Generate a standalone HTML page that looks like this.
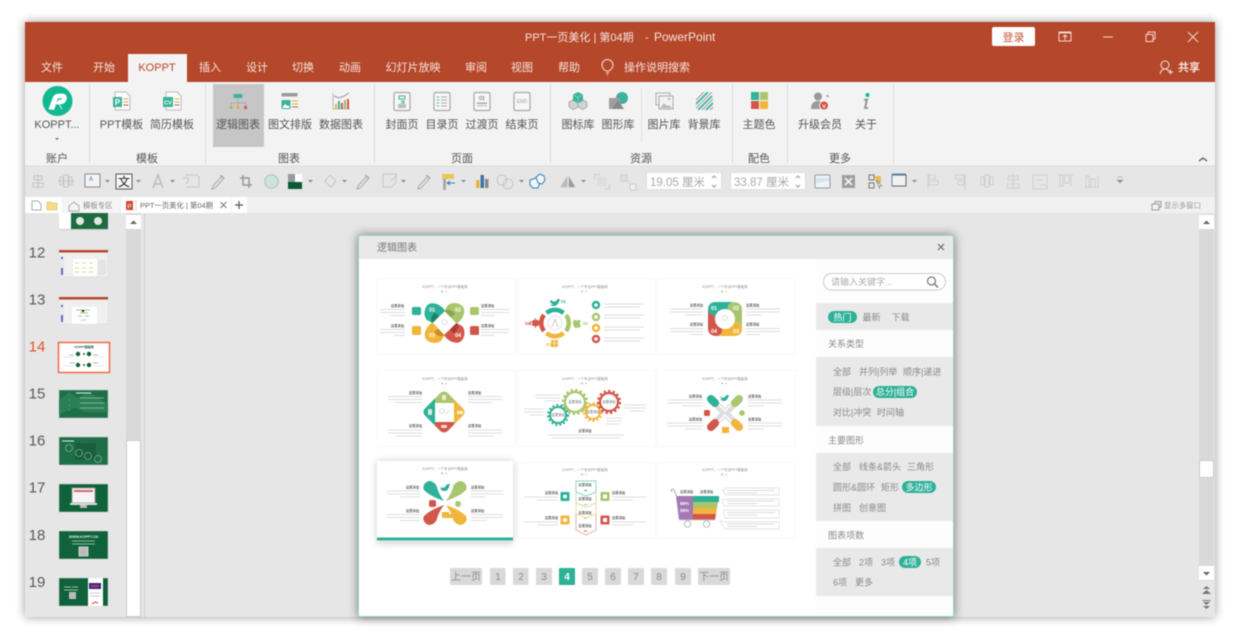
<!DOCTYPE html>
<html lang="zh"><head><meta charset="utf-8"><title>PPT一页美化</title>
<style>
html,body{margin:0;padding:0;background:#fff;width:1240px;height:640px;overflow:hidden}
svg{display:block;filter:blur(.55px);font-family:"Liberation Sans","Noto Sans CJK SC",sans-serif}
.tb{font-size:11px;fill:#f7e4de}
.rb{font-size:11px;fill:#555}
.m{text-anchor:middle}
.e{text-anchor:end}
.s{font-size:9px;fill:#8a8a8a}
.w{fill:#fff}
.sn{font-size:15px;fill:#5a5a5a;text-anchor:middle}
.ct{font-size:3.4px;fill:#8a8a8a;text-anchor:middle}
.ch{font-size:3.3px;fill:#666;font-weight:bold}
.l{stroke:#d2d2d2;stroke-width:.8;fill:none}
.ic{fill:none;stroke:#c6c6c6;stroke-width:1}
.g{fill:#c8c8c8}
.pg{font-size:10px;fill:#8a8a8a;text-anchor:middle}
.card{fill:#fff;stroke:#f8f8f8;stroke-width:1}
.n{font-size:5.500px;fill:#fff;text-anchor:middle;font-weight:bold}
</style></head><body>
<svg width="1240" height="640" viewBox="0 0 1240 640" xmlns="http://www.w3.org/2000/svg">
<defs>
<filter id="sh" x="-10%" y="-10%" width="120%" height="120%"><feGaussianBlur stdDeviation="5"/></filter>
<filter id="sh2" x="-30%" y="-30%" width="160%" height="160%"><feGaussianBlur stdDeviation="4"/></filter>
<clipPath id="dia"><rect x="428" y="396" width="32" height="32" rx="5" transform="rotate(45 444 412)"/></clipPath>
<clipPath id="bgst"><rect x="696" y="92" width="17" height="18"/></clipPath>
</defs>
<rect width="1240" height="640" fill="#fff"/>
<rect x="25" y="22" width="1190" height="595" fill="#000" opacity=".4" filter="url(#sh)"/>
<!-- window -->
<rect x="25" y="22" width="1190" height="595" fill="#e6e6e6"/>
<rect x="25" y="22" width="1190" height="60" fill="#b5472a"/>
<text x="525" y="41" class="tb">PPT一页美化 | 第04期</text><text x="645" y="41" class="tb">-</text><text x="654" y="41" class="tb" style="font-size:12px">PowerPoint</text>
<rect x="992" y="27" width="43" height="19" rx="2" fill="#fff"/>
<text x="1013.500" y="41" class="m" style="font-size:11px;fill:#c4583c">登录</text>
<rect x="1059" y="32" width="12" height="9" fill="none" stroke="#f3d6cd"/><path d="M1065 40v-5m-2 2l2-2 2 2M1059 33h12" fill="none" stroke="#f3d6cd"/>
<path d="M1103 37h10" stroke="#f3d6cd"/>
<path d="M1146 34.500h7v7h-7zM1148 34v-2h7v7h-2" fill="none" stroke="#f3d6cd"/>
<path d="M1188 32l10 10m0-10l-10 10" stroke="#f3d6cd"/>
<rect x="128" y="54" width="59" height="28" fill="#f3f3f3"/>
<g class="tb">
<text x="52" y="71" class="m">文件</text><text x="104" y="71" class="m">开始</text>
<text x="157" y="71" class="m" style="fill:#b5472a">KOPPT</text>
<text x="210" y="71" class="m">插入</text><text x="257" y="71" class="m">设计</text><text x="303" y="71" class="m">切换</text><text x="350" y="71" class="m">动画</text><text x="413" y="71" class="m">幻灯片放映</text><text x="476" y="71" class="m">审阅</text><text x="522" y="71" class="m">视图</text><text x="569" y="71" class="m">帮助</text><text x="657" y="71" class="m">操作说明搜索</text>
<text x="1189" y="71" class="m" style="font-weight:bold">共享</text></g>
<path d="M606 71c-3-2-4-4-4-6a5.500 5.500 0 0 1 11 0c0 2-1 4-4 6zM606 73h3M607 75h1" fill="none" stroke="#f7e4de"/>
<circle cx="1165" cy="65" r="4" fill="none" stroke="#f7e4de"/><path d="M1160 74c1-4 3-5 5-5s3 1 4 2M1168 72h5m-2.500-2.500v5" fill="none" stroke="#f7e4de"/>
<!-- ribbon -->
<rect x="25" y="82" width="1190" height="84" fill="#f3f3f3"/>
<rect x="213" y="84" width="51" height="63" fill="#c6c6c6"/>
<path d="M89.500 84v79M205.500 84v79M374.500 84v79M550.500 84v79M732.500 84v79M787.500 84v79M893.500 84v79" stroke="#d9d9d9"/>
<path d="M641.500 88v54" stroke="#e2e2e2"/>
<g class="rb">
<text x="57" y="128" class="m">KOPPT...</text><text x="121.500" y="128" class="m">PPT模板</text><text x="172" y="128" class="m">简历模板</text>
<text x="238" y="128" class="m">逻辑图表</text><text x="290" y="128" class="m">图文排版</text><text x="341" y="128" class="m">数据图表</text>
<text x="402" y="128" class="m">封面页</text><text x="442" y="128" class="m">目录页</text><text x="482" y="128" class="m">过渡页</text><text x="522" y="128" class="m">结束页</text>
<text x="578" y="128" class="m">图标库</text><text x="618" y="128" class="m">图形库</text><text x="664" y="128" class="m">图片库</text><text x="704" y="128" class="m">背景库</text>
<text x="759" y="128" class="m">主题色</text><text x="820" y="128" class="m">升级会员</text><text x="866" y="128" class="m">关于</text>
<text x="57" y="162" class="m">账户</text><text x="147" y="162" class="m">模板</text><text x="289" y="162" class="m">图表</text><text x="462" y="162" class="m">页面</text><text x="641" y="162" class="m">资源</text><text x="759" y="162" class="m">配色</text><text x="840" y="162" class="m">更多</text>
</g>
<path d="M55 138h4l-2 2z" fill="#666"/>
<path d="M1199 161l4-3 4 3" fill="none" stroke="#555" stroke-width="1.300"/>
<!-- logo -->
<circle cx="57.500" cy="101" r="15" fill="#13b891"/>
<path d="M49 109l4-11c1-3 3-4 6-4h3c4 0 5 3 4 6-1 3-3 4-7 4h-3l3-4h2c2 0 2-2 0-2h-2c-1 0-2 .5-2 1.500l-3 10zM59 104l3 5" fill="#fff" stroke="#fff" stroke-width=".8"/>
<!-- ppt -->
<path d="M115 92h11l4 4v14h-15z" fill="#fbfbfb" stroke="#bdbdbd"/><rect x="113" y="97" width="9" height="10" fill="#3cb39b"/><text x="117.500" y="105" class="w m" style="font-size:8px;font-weight:bold">P</text><path d="M123.500 99h5" stroke="#e8b33e"/><path d="M123.500 102h5" stroke="#9fc06a"/><path d="M123.500 105h5" stroke="#d4574a"/>
<path d="M166 92h11l4 4v14h-15z" fill="#fbfbfb" stroke="#bdbdbd"/><rect x="163" y="97" width="10" height="10" fill="#3cb39b"/><text x="168" y="104.500" class="w m" style="font-size:5.500px;font-weight:bold">CV</text><path d="M174.500 99h5" stroke="#e8b33e"/><path d="M174.500 102h5" stroke="#9fc06a"/><path d="M174.500 105h5" stroke="#d4574a"/>
<!-- org -->
<rect x="233.500" y="94" width="9" height="4" rx="1" fill="#3cb39b"/><path d="M238 98v5M231 108v-5h15v5M238 103v5" fill="none" stroke="#aaa"/><rect x="229.500" y="106" width="3" height="3" fill="#9fc06a"/><rect x="236.500" y="106" width="3" height="3" fill="#e8b33e"/><rect x="244" y="106" width="3" height="3" fill="#d4574a"/>
<!-- layout -->
<rect x="281.500" y="93" width="16" height="3.500" fill="#9a9a9a"/><rect x="281.500" y="100" width="9" height="9" fill="#3cb39b"/><path d="M282 108l3-4 2 2 1-1 2 3z" fill="#fff"/><path d="M292 101h6" stroke="#e8b33e"/><path d="M292 104h6" stroke="#9fc06a"/><path d="M292 107h6" stroke="#d4574a"/>
<!-- data -->
<path d="M333 93v16h17" fill="none" stroke="#bbb"/><path d="M334 96l5 2 5-2 5-3" fill="none" stroke="#999"/><rect x="335" y="104" width="2" height="5" fill="#e8b33e"/><rect x="338" y="101" width="2" height="8" fill="#3cb39b"/><rect x="341" y="103" width="2" height="6" fill="#d4574a"/><rect x="344" y="100" width="2" height="9" fill="#9fc06a"/><rect x="347" y="99" width="2" height="10" fill="#d4574a"/>
<!-- pages -->
<g fill="#f7f7f7" stroke="#a8a8a8" stroke-width="1.200"><rect x="394" y="92.500" width="16" height="18" rx="1.500"/><rect x="434" y="92.500" width="16" height="18" rx="1.500"/><rect x="474" y="92.500" width="16" height="18" rx="1.500"/><rect x="514" y="92.500" width="16" height="18" rx="1.500"/></g>
<path d="M399 96h6v3h-6zM401 101h3v2h-3" fill="none" stroke="#3cb39b"/><rect x="398" y="104" width="8" height="4" fill="#bbb"/>
<path d="M437 97h2M437 100h2M437 103h2M437 106h2" stroke="#3cb39b"/><path d="M441 97h6M441 100h6M441 103h6M441 106h6" stroke="#aaa"/>
<text x="482" y="100" class="m" style="font-size:5.500px;fill:#555">01</text><rect x="477" y="102.500" width="10" height="1.500" fill="#aaa"/><rect x="477" y="105" width="10" height="1.500" fill="#ccc"/>
<text x="522" y="103" class="m" style="font-size:5px;fill:#bbb;font-weight:bold">END</text>
<!-- cubes -->
<path d="M573.500 99.500l4.500 2.500v5l-4.500 2.500-4.500-2.500v-5zM582.500 99.500l4.500 2.500v5l-4.500 2.500-4.500-2.500v-5z" fill="#d2d2d2" stroke="#8d8d8d" stroke-width=".6"/><path d="M578 92l5 2.500v6l-5 3-5-3v-6z" fill="#3cb39b"/><path d="M573 94.500l5 3 5-3M578 97.500v6" fill="none" stroke="#9fdccd" stroke-width=".6"/>
<!-- shapes -->
<circle cx="622" cy="98" r="6" fill="#3cb39b"/><rect x="609" y="98" width="11" height="11" fill="#9e9e9e"/><path d="M612 109l6-9 6 9z" fill="#888"/>
<!-- pics -->
<rect x="656" y="93" width="14" height="12" fill="none" stroke="#aaa"/><rect x="659" y="96" width="14" height="13" fill="#f3f3f3" stroke="#aaa"/><path d="M660 108l4-5 3 3 2-1 3 3z" fill="#bbb"/><circle cx="669" cy="99" r="1.300" fill="#bbb"/>
<g clip-path="url(#bgst)"><path d="M694 106l14-14M698 110l14-14M702 114l14-14" stroke="#3cb39b" stroke-width="1.800"/><path d="M694 102l10-10M696 108l16-16M700 112l16-16M704 116l14-14" stroke="#aaa" stroke-width="1.200"/></g>
<!-- theme -->
<rect x="751" y="92" width="8" height="8" fill="#30b49a"/><rect x="760" y="92" width="8" height="8" fill="#a9c66f"/><rect x="751" y="101" width="8" height="8" fill="#d2574a"/><rect x="760" y="101" width="8" height="8" fill="#f2b53c"/>
<!-- vip -->
<circle cx="818" cy="96.500" r="4" fill="#9a9a9a"/><path d="M811 109c0-6 3-8 7-8s6 2 6 8z" fill="#9a9a9a"/><circle cx="824" cy="105.500" r="4.500" fill="#d5503f" stroke="#f3f3f3"/><text x="824" y="108" class="m" style="font-size:6px;fill:#fff;font-weight:bold">v</text><path d="M826 96h3m-1.500-1.500v3" stroke="#aaa"/>
<!-- about -->
<circle cx="867.500" cy="95" r="2" fill="#13b891"/><path d="M864 100l3-.5-2 8.500h3" fill="none" stroke="#999" stroke-width="2"/>
<!-- toolbar -->
<rect x="25" y="166" width="1190" height="31" fill="#e6e6e6"/><path d="M25 166h1190" stroke="#dcdcdc"/>
<g class="ic">
<path d="M34 176h8v4h-8zM33 183h10v4H33zM38 174v15"/>
<path d="M60 177h3v8h-3zM64 175h4v12h-4zM69 177h3v8h-3zM58 181h16"/>
<path d="M153 188l5-13 5 13m-8-4h6" stroke="#bbb" stroke-width="1.400"/>
<path d="M185 175h12l2 2v10h-12M183 178h5v4l-3 2"/>
<path d="M212 189l3-1 9-10-2-2-9 10zM220 175l4 4" stroke="#aaa"/>
<path d="M243 175v10h9M240 178h9v10" stroke="#999" stroke-width="1.500"/>
<path d="M325 181l5-6 6 6-5 6z"/><path d="M357 189l3-1 9-10-2-2-9 10zM365 175l4 4" stroke="#aaa"/>
<path d="M383 174h13v8l-4 5h-9zM397 175l-6 6"/>
<path d="M418 189l3-1 9-10-2-2-9 10zM426 175l4 4" stroke="#aaa"/>
<circle cx="502" cy="180" r="5"/><circle cx="508" cy="184" r="5"/>
<path d="M561 187l6-10v10zM569 177l6 10h-6z"/>
<path d="M928 174v16M929 175h6v4h-6zM929 181h9v4h-9z" stroke="#cfcfcf"/>
<path d="M965 174v16M955 175h9v4h-9zM958 181h6v4h-6z" stroke="#cfcfcf"/>
<path d="M981 177h3v8h-3zM985 175h4v12h-4zM990 177h3v8h-3z" stroke="#cfcfcf"/>
<path d="M1008 176h10v4h-10zM1007 184h12v4h-12zM1013 174v16" stroke="#cfcfcf"/>
<path d="M1033 175h14v14h-14zM1036 180h6M1040 185h6" stroke="#cfcfcf"/>
<path d="M1060 175h3v11h-3zM1065 175h4v8h-4zM1071 176v10M1059 175h14" stroke="#cfcfcf"/>
<path d="M1086 187h3v-11h-3zM1091 187h4v-8h-4zM1098 176v10M1085 187h14" stroke="#cfcfcf"/>
</g>
<path d="M567 177v10h-6z" fill="#bbb"/><path d="M569 177l6 10h-6z" fill="#9a9a9a"/>
<rect x="597" y="177" width="9" height="9" fill="#e0dcdf"/><path d="M594.500 179v-4.500h5M609.500 184v5h-5" fill="none" stroke="#ccc"/>
<rect x="621" y="175" width="6" height="6" fill="#e0dcdf" stroke="#ccc"/><rect x="630" y="184" width="6" height="6" fill="#f0f0f0" stroke="#ccc"/><rect x="627" y="181" width="3" height="3" fill="#ddd"/>
<rect x="85" y="174" width="15" height="13" fill="#f4f4f4" stroke="#8a8a8a"/><text x="89" y="181" style="font-size:6px;fill:#3574b5">A</text>
<rect x="116" y="174" width="16" height="15" fill="#f7f7f7" stroke="#555"/><text x="124" y="186" class="m" style="font-size:12px;fill:#222">文</text>
<circle cx="271.500" cy="181.500" r="6.800" fill="#cfe3da" stroke="#a9c5ba"/>
<rect x="288" y="174" width="14" height="15" fill="#065c33"/><rect x="288" y="174" width="7" height="8" fill="#999"/><rect x="295" y="174" width="7" height="8" fill="#fff"/>
<rect x="442" y="174" width="12" height="5" fill="#e8c65a"/><rect x="443" y="179" width="3" height="11" fill="#aaa"/><path d="M447 183h8m-8 0l3-2m-3 2l3 2" stroke="#3576ba" fill="none"/>
<rect x="476" y="180" width="3.500" height="8" fill="#e8b33e"/><rect x="480.500" y="175" width="3.500" height="13" fill="#3e74a8"/><rect x="485" y="179" width="3.500" height="9" fill="#888"/>
<path d="M530 180l6-2 4 4-2 6-5 0-3-3z" fill="#f2f6fa" stroke="#3a7fb5"/><path d="M536 177l4-3 4 2 1 4-3 4-4-1z" fill="#f2f6fa" stroke="#3a7fb5"/>
<path d="M105 180h5l-2.500 2.500zM136 180h5l-2.500 2.500zM170 180h5l-2.500 2.500zM308 180h5l-2.500 2.500zM342 180h5l-2.500 2.500zM401 180h5l-2.500 2.500zM461 180h5l-2.500 2.500zM519 180h5l-2.500 2.500zM581 180h5l-2.500 2.500zM912 180h5l-2.500 2.500z" fill="#888"/>
<g fill="#fff" stroke="#e0e0e0"><rect x="646.500" y="172.500" width="75" height="17"/><rect x="730.500" y="172.500" width="75" height="17"/></g>
<g style="font-size:11.500px;fill:#aaa"><text x="650" y="186">19.05 厘米</text><text x="734" y="186">33.87 厘米</text></g>
<path d="M712 178l2-2 2 2M712 185l2 2 2-2M796 178l2-2 2 2M796 185l2 2 2-2" fill="none" stroke="#999"/>
<rect x="815" y="175" width="15" height="13" rx="1" fill="#eef3f8" stroke="#999"/><path d="M816 178h13v3l-13 2z" fill="#d5e4f0"/>
<rect x="842" y="175" width="13" height="13" fill="#9e9e9e"/><path d="M845 178l7 7m0-7l-7 7" stroke="#fff" stroke-width="1.500"/>
<path d="M869 175h5v5h-5zM869 183h5v5h-5zM877 183h3" fill="none" stroke="#777"/><path d="M874 176h7v6l-3 2-1-3z" fill="#eebb50"/><path d="M876 180l6 6-3 0 1 3z" fill="#eee" stroke="#777" stroke-width=".6"/>
<rect x="892" y="175" width="14" height="11" fill="#f1f1f1" stroke="#666"/><path d="M892 174h14M892 174v12" stroke="#5a8ec0"/>
<path d="M1117 177h6M1117 180h6l-3 3z" fill="#999" stroke="#999" stroke-width=".6"/>
<!-- tab bar -->
<rect x="25" y="197" width="1190" height="16" fill="#f1f1f1"/>
<rect x="25" y="197" width="37" height="16" fill="#fff"/><rect x="63" y="197" width="57" height="16" fill="#f5f5f5"/><rect x="121" y="197" width="110" height="16" fill="#fff"/><rect x="232" y="197" width="15" height="16" fill="#fff"/>
<path d="M32 201h6l3 3v6h-9z" fill="none" stroke="#aaa"/>
<path d="M47 202h4l1 1h5v7h-10z" fill="#f6dc86" stroke="#d8b85a" stroke-width=".6"/>
<path d="M69 206l5-4 5 4v5h-10z" fill="none" stroke="#aaa"/>
<text x="83" y="208" style="font-size:7.400px;fill:#888">模板专区</text>
<rect x="130" y="201" width="6" height="9" fill="#fff" stroke="#ddd"/><rect x="126" y="201" width="7" height="9" rx="1" fill="#cc4a2c"/><text x="129.500" y="208.500" class="m" style="font-size:6.500px;fill:#fff">P</text>
<text x="140" y="208" style="font-size:7.400px;fill:#666">PPT一页美化 | 第04期</text>
<path d="M220.500 202l6 6m0-6l-6 6" stroke="#777"/>
<path d="M235 205h8m-4-4v8" stroke="#555" stroke-width="1.200"/>
<path d="M1152 204h7v6h-7zM1155 204v-2.500h6v5.500h-2" fill="none" stroke="#999"/>
<text x="1164" y="208" style="font-size:7.400px;fill:#999">显示多窗口</text>
<!-- left pane -->
<text x="37" y="257.500" class="sn">12</text><text x="37" y="304.500" class="sn">13</text><text x="37" y="351.500" class="sn" style="fill:#e0532e">14</text><text x="37" y="398.500" class="sn">15</text><text x="37" y="445.500" class="sn">16</text><text x="37" y="492.500" class="sn">17</text><text x="37" y="540" class="sn">18</text><text x="37" y="587" class="sn">19</text>
<rect x="59" y="213" width="12" height="16" fill="#fff"/><rect x="71" y="213" width="37" height="16" fill="#1e6b42"/><circle cx="80" cy="221" r="4" fill="#dfe8e2"/><circle cx="98" cy="221" r="4" fill="#dfe8e2"/><rect x="59" y="229" width="49" height="1" fill="#ccc"/>
<!-- thumb 12 -->
<g><rect x="59" y="249" width="49" height="28" fill="#f0f0f0" stroke="#d7d7d7" stroke-width=".5"/><rect x="59" y="250" width="49" height="2.500" fill="#b5472a"/><rect x="59" y="253" width="49" height="3" fill="#eee"/><rect x="60" y="256" width="4" height="20" fill="#e9e9e9"/><rect x="61" y="257" width="2" height="2" fill="#5f6fc0"/><rect x="61" y="268" width="2" height="7" fill="#5f6fc0"/><rect x="73" y="259" width="24" height="17" fill="#fff"/><path d="M75 263h4M82 263h4M89 263h4M75 268h4M82 268h4M89 268h4M75 272h4M82 272h4M89 272h4" stroke="#e4d695"/><path d="M98 260h8v15h-8" fill="#e4e4e4"/></g>
<g><rect x="59" y="296" width="49" height="28" fill="#f0f0f0" stroke="#d7d7d7" stroke-width=".5"/><rect x="59" y="297" width="49" height="2.500" fill="#b5472a"/><rect x="59" y="300" width="49" height="3" fill="#eee"/><rect x="60" y="303" width="4" height="20" fill="#e9e9e9"/><rect x="61" y="305" width="2" height="2" fill="#5f6fc0"/><rect x="61" y="315" width="2" height="7" fill="#5f6fc0"/><rect x="72" y="307" width="25" height="17" fill="#fff"/><path d="M76 310h5l2 3 2-3h5M78 316h4M85 316h4" stroke="#8fc8b8"/><path d="M80 313h8" stroke="#e7b660"/><rect x="81" y="319" width="5" height="2" fill="#d4e6df"/></g>
<rect x="58.500" y="342.500" width="51" height="30" fill="#fff" stroke="#f06a47" stroke-width="1.500"/>
<text x="84" y="348" class="m" style="font-size:3px;fill:#0f6239;font-weight:bold">KOPPT模板网</text>
<g fill="#0f6239"><circle cx="78" cy="354" r="2.200"/><circle cx="89" cy="354" r="2.200"/><circle cx="78" cy="365" r="2.200"/><circle cx="89" cy="365" r="2.200"/><circle cx="84" cy="354" r="1"/><circle cx="84" cy="365" r="1"/></g><path d="M69 355h5M93 355h5M70 363h5M93 363h5" stroke="#a8c2b3"/><path d="M63 357h10M94 357h12M62 366h12M94 366h11" stroke="#dde" stroke-width=".7"/>
<rect x="59" y="390" width="49" height="28" fill="#1e6f48" stroke="#ccc" stroke-width=".5"/><path d="M59 400l10-8 8 6 12-6 19 12v8H85l-10-4-16 6z" fill="#2a7f55"/><path d="M76 393h15" stroke="#dfeee6"/><path d="M80 398h24M80 403h24M80 408h24M69 400h1M69 405h1M69 410h1" stroke="#7eb29a"/>
<rect x="59" y="437" width="49" height="28" fill="#1e6f48" stroke="#ccc" stroke-width=".5"/><rect x="75" y="443" width="21" height="17" fill="#1a5e3e"/><path d="M62 441h12" stroke="#dfeee6"/><g fill="none" stroke="#9dc6b1" stroke-width=".6"><circle cx="69" cy="448" r="3.500"/><circle cx="79" cy="453" r="3.500"/><circle cx="88" cy="456" r="3.500"/><circle cx="98" cy="459" r="3.500"/></g>
<rect x="59" y="484" width="49" height="28" fill="#0f6239" stroke="#ccc" stroke-width=".5"/><rect x="72" y="488" width="23" height="15" fill="#f4f4f4" stroke="#999"/><rect x="70" y="503" width="27" height="2" fill="#ddd"/><rect x="80" y="505" width="7" height="3" fill="#bbb"/><rect x="74" y="490" width="19" height="2" fill="#d66"/>
<rect x="59" y="531" width="49" height="28" fill="#0f6239" stroke="#ccc" stroke-width=".5"/><text x="83.500" y="538" class="m" style="font-size:3.600px;fill:#e5f0ea;font-weight:bold">WWW.KOPPT.CN</text><path d="M72 541h23M72 544h23" stroke="#8cb8a2"/><rect x="79" y="547" width="9" height="9" fill="#bbb" stroke="#eee" stroke-width=".7"/>
<rect x="59" y="578" width="49" height="28" fill="#0f6239" stroke="#ccc" stroke-width=".5"/><rect x="88" y="578" width="15" height="28" fill="#fff"/><rect x="89" y="583" width="12" height="6" fill="#2a2a96"/><rect x="91" y="585" width="8" height="2" fill="#d33"/><path d="M90 593h10M90 596h10" stroke="#ccc"/><path d="M92 604l3-2 3 1" stroke="#d33" fill="none"/><path d="M64 587h7M72 587h6M64 590h14" stroke="#cfe0d6" stroke-width=".7"/><rect x="69" y="592" width="7" height="7" fill="#bbb"/>
<rect x="126" y="213" width="15" height="227" fill="#d8d8d8"/><rect x="126" y="215" width="15" height="14" fill="#fff"/><path d="M130 224l3.500-3.500 3.500 3.500z" fill="#666"/><rect x="126.500" y="440.500" width="14" height="176" fill="#fff" stroke="#ccc"/>
<path d="M144.500 213v404" stroke="#cfcfcf"/>
<!-- right scroll -->
<rect x="1199" y="214" width="15" height="367" fill="#d9d9d9"/><rect x="1199" y="215" width="15" height="14" fill="#fff"/><path d="M1203 224l3.500-3.500 3.500 3.500z" fill="#666"/>
<rect x="1199.500" y="460.500" width="14" height="17" fill="#fff" stroke="#c8c8c8"/><rect x="1199" y="566" width="15" height="14" fill="#fff"/><path d="M1203 572l3.500 3.500 3.500-3.500z" fill="#666"/>
<path d="M1203 589l3.500-3 3.500 3zM1203 593l3.500-3 3.500 3zM1203 602l3.500 3 3.500-3zM1203 606l3.500 3 3.500-3z" fill="#777"/><path d="M1202.500 593.500h8M1202.500 600.500h8" stroke="#777"/>
<!-- dialog -->
<rect x="358" y="235" width="596" height="382" fill="#000" opacity=".5" filter="url(#sh)"/>
<rect x="358.500" y="235.500" width="595" height="381" fill="#fff" stroke="#90d8c8"/>
<rect x="359" y="236" width="594" height="23" fill="#e9e9e9"/>
<text x="377" y="251" style="font-size:10px;fill:#777">逻辑图表</text>
<path d="M938 244l6 6m0-6l-6 6" stroke="#666" stroke-width="1.100"/>
<!-- sidebar -->
<rect x="816" y="259" width="137" height="357" fill="#fdfdfd"/>
<rect x="816" y="303" width="137" height="27" fill="#e9e9e9"/><rect x="816" y="357" width="137" height="69" fill="#e9e9e9"/><rect x="816" y="453" width="137" height="68" fill="#e9e9e9"/><rect x="816" y="548" width="137" height="48" fill="#e9e9e9"/>
<rect x="823.500" y="273.500" width="122" height="16.500" rx="8.200" fill="#fff" stroke="#ccc"/>
<text x="831" y="285" style="font-size:9px;fill:#aaa">请输入关键字...</text>
<circle cx="931.500" cy="281" r="4" fill="none" stroke="#777" stroke-width="1.200"/><path d="M934.500 284l3.500 3.500" stroke="#777" stroke-width="1.500"/>
<g fill="#2db197"><rect x="828" y="311" width="29" height="12" rx="6"/><rect x="873" y="386" width="44" height="12" rx="6"/><rect x="902" y="481" width="34" height="12" rx="6"/><rect x="899" y="556" width="22" height="12" rx="6"/></g>
<g class="s">
<text x="842.500" y="320.500" class="m w" style="fill:#fff">热门</text><text x="871.500" y="320.500" class="m">最新</text><text x="900.500" y="320.500" class="m">下载</text>
<text x="828" y="347">关系类型</text>
<text x="833" y="375">全部</text><text x="859" y="375">并列|列举</text><text x="903" y="375">顺序|递进</text>
<text x="833" y="395">层级|层次</text><text x="895" y="395" class="m" style="fill:#fff">总分|组合</text>
<text x="833" y="415.500">对比|冲突</text><text x="877" y="415.500">时间轴</text>
<text x="828" y="443.500">主要图形</text>
<text x="833" y="470">全部</text><text x="859" y="470">线条&amp;箭头</text><text x="907" y="470">三角形</text>
<text x="833" y="490.500">圆形&amp;圆环</text><text x="881" y="490.500">矩形</text><text x="919" y="490.500" class="m" style="fill:#fff">多边形</text>
<text x="833" y="511">拼图</text><text x="859" y="511">创意图</text>
<text x="828" y="538.500">图表项数</text>
<text x="833" y="565.500">全部</text><text x="859" y="565.500">2项</text><text x="881" y="565.500">3项</text><text x="910" y="565.500" class="m" style="fill:#fff">4项</text><text x="926" y="565.500">5项</text>
<text x="833" y="585.500">6项</text><text x="855" y="585.500">更多</text>
</g>
<!-- cards -->
<g class="card"><rect x="377.500" y="278.500" width="138" height="76"/><rect x="517.500" y="278.500" width="138" height="76"/><rect x="657.500" y="278.500" width="138" height="76"/><rect x="377.500" y="370.500" width="138" height="76"/><rect x="517.500" y="370.500" width="138" height="76"/><rect x="657.500" y="370.500" width="138" height="76"/><rect x="517.500" y="462.500" width="138" height="76"/><rect x="657.500" y="462.500" width="138" height="76"/></g>
<rect x="377" y="461" width="136" height="82" fill="#000" opacity=".2" filter="url(#sh2)"/>
<rect x="377" y="461" width="136" height="80" fill="#fff"/><rect x="377" y="537.500" width="136" height="3" fill="#2db197"/>
<g class="ct">
<text x="445" y="288">KOPPT，一个专业PPT模板网</text><text x="585" y="288">KOPPT，一个专业PPT模板网</text><text x="725" y="288">KOPPT，一个专业PPT模板网</text>
<text x="445" y="380">KOPPT，一个专业PPT模板网</text><text x="585" y="380">KOPPT，一个专业PPT模板网</text><text x="725" y="380">KOPPT，一个专业PPT模板网</text>
<text x="445" y="470">KOPPT，一个专业PPT模板网</text><text x="585" y="471">KOPPT，一个专业PPT模板网</text><text x="725" y="471">KOPPT，一个专业PPT模板网</text>
</g>
<g fill="#2db197"><circle cx="442" cy="291.500" r=".7"/><circle cx="582" cy="291.500" r=".7"/><circle cx="722" cy="291.500" r=".7"/><circle cx="442" cy="383.500" r=".7"/><circle cx="582" cy="383.500" r=".7"/><circle cx="722" cy="383.500" r=".7"/><circle cx="442" cy="473.500" r=".7"/><circle cx="582" cy="474.500" r=".7"/><circle cx="722" cy="474.500" r=".7"/></g>
<g fill="#f2b53c"><circle cx="446" cy="291.500" r=".7"/><circle cx="586" cy="291.500" r=".7"/><circle cx="726" cy="291.500" r=".7"/><circle cx="446" cy="383.500" r=".7"/><circle cx="586" cy="383.500" r=".7"/><circle cx="726" cy="383.500" r=".7"/><circle cx="446" cy="473.500" r=".7"/><circle cx="586" cy="474.500" r=".7"/><circle cx="726" cy="474.500" r=".7"/></g>
<!-- card 1 -->
<g transform="rotate(0 444.500 323)"><path d="M445 311C441 304 433 302 429 304C424 307 423 316 427 320L432.500 323Z" fill="#2db197"/><path d="M432.500 323L439 316.500L435 312.500C431 316 430 320 432.500 323Z" fill="#1f7f6d"/></g>
<g transform="rotate(90 444.500 323)"><path d="M445 311C441 304 433 302 429 304C424 307 423 316 427 320L432.500 323Z" fill="#a9c66f"/><path d="M432.500 323L439 316.500L435 312.500C431 316 430 320 432.500 323Z" fill="#8aa653"/></g>
<g transform="rotate(180 444.500 323)"><path d="M445 311C441 304 433 302 429 304C424 307 423 316 427 320L432.500 323Z" fill="#d2574a"/><path d="M432.500 323L439 316.500L435 312.500C431 316 430 320 432.500 323Z" fill="#a93c30"/></g>
<g transform="rotate(270 444.500 323)"><path d="M445 311C441 304 433 302 429 304C424 307 423 316 427 320L432.500 323Z" fill="#f2b53c"/><path d="M432.500 323L439 316.500L435 312.500C431 316 430 320 432.500 323Z" fill="#c98f20"/></g>
<text x="432" y="311.500" class="n">01</text><text x="458" y="311.500" class="n">02</text><text x="432" y="337" class="n">03</text><text x="458" y="337" class="n">04</text>
<circle cx="444.500" cy="322" r="2.500" fill="none" stroke="#ddd"/>
<rect x="412" y="307" width="9" height="8" rx="1.500" fill="#2db197"/><rect x="412" y="326" width="9" height="9" rx="1.500" fill="#f2b53c"/><rect x="470" y="307" width="9" height="8" rx="1.500" fill="#a9c66f"/><rect x="470" y="326" width="9" height="9" rx="1.500" fill="#d2574a"/>
<text x="404" y="307" class="ch e">这里添加</text><text x="404" y="327" class="ch e">这里添加</text><text x="481" y="307" class="ch">这里添加</text><text x="481" y="327" class="ch">这里添加</text>
<path class="l" d="M380 309.500h25M380 312.500h25M390 315.500h15M380 329.500h25M380 332.500h25M393 335.500h12M481 309.500h28M481 312.500h28M481 315.500h14M481 329.500h28M481 332.500h28M481 335.500h14"/>
<!-- card 2 -->
<g fill="none" stroke-width="4.500"><path d="M546.500 313A13 13 0 0 1 563.500 313" stroke="#2db197"/><path d="M566 315A13 13 0 0 1 566 331" stroke="#a9c66f"/><path d="M563.500 333A13 13 0 0 1 546.500 333" stroke="#f2b53c"/><path d="M544 331A13 13 0 0 1 544 315" stroke="#d2574a"/></g>
<path d="M555 308l-3 2 3-.5 3 .5z" fill="#2db197"/><path d="M555 338l-3-2 3 .5 3-.5z" fill="#f2b53c"/>
<circle cx="555" cy="323" r="7" fill="none" stroke="#e4e4e4"/><path d="M552 327l3-8 3 8" fill="none" stroke="#ccc"/>
<path d="M551 300c2 2 4 2 5 1 1-2 2-2 4-2-1 3-2 6-5 7-2 0-4 0-5-1 2 0 3-1 3-1-2 0-3-2-3-3z" fill="#2db197"/><text x="561" y="303" style="font-size:4.500px;fill:#2db197;font-weight:bold">01</text>
<path d="M573 322c0-1 1-2 2-2l2 .5 2-.5c1 0 2 1 2 1-2 1-1 4 0 4-.5 2-2 3-3 3l-1-.5-1 .5c-2 0-3-3-3-6z" fill="#a9c66f"/><text x="583" y="325" style="font-size:4.500px;fill:#a9c66f;font-weight:bold">02</text>
<rect x="551" y="340" width="7" height="7" fill="#f2b53c"/><path d="M551 343h7M554.500 340v7" stroke="#fff" stroke-width=".5"/><text x="546" y="346" style="font-size:4.500px;fill:#f2b53c;font-weight:bold">03</text>
<rect x="532" y="320" width="7" height="6" rx="1.500" fill="#d2574a"/><path d="M535.500 318v10M530.500 321v4M540.500 321v4" stroke="#d2574a"/><text x="525" y="325" style="font-size:4.500px;fill:#d2574a;font-weight:bold">04</text>
<circle cx="596" cy="305" r="4.200" fill="#2db197"/><circle cx="596" cy="317" r="4.200" fill="#a9c66f"/><circle cx="596" cy="328" r="4.200" fill="#f2b53c"/><circle cx="596" cy="339" r="4.200" fill="#d2574a"/><g fill="#fff"><circle cx="596" cy="305" r="1.800"/><circle cx="596" cy="317" r="1.800"/><circle cx="596" cy="328" r="1.800"/><circle cx="596" cy="339" r="1.800"/></g>
<path class="l" d="M604 304h40M604 307h36M604 315h40M604 318h36M604 327h40M604 330h36M604 338h40M604 341h36"/>
<!-- card 3 -->
<g><path d="M725 319L728 309Q727 304 733 302H716Q708 302 708 310V311Q711 315 715 316Z" fill="#2db197"/><path d="M725 319L735 322Q740 321 742 327V310Q742 302 733 302Q727 304 728 309Z" fill="#a9c66f"/><path d="M725 319L722 329Q723 334 717 336H734Q742 336 742 328V327Q740 321 735 322Z" fill="#f2b53c"/><path d="M725 319L715 316Q711 315 708 311V328Q708 336 717 336Q723 334 722 329Z" fill="#d2574a"/></g>
<circle cx="725" cy="319" r="10" fill="#fff"/><circle cx="725" cy="318" r="2.500" fill="none" stroke="#ddd"/>
<text x="714" y="310" class="n">01</text><text x="736" y="310" class="n">02</text><text x="736" y="333" class="n">03</text><text x="714" y="333" class="n">04</text>
<text x="703" y="306.500" class="ch e">这里添加</text><text x="703" y="325.500" class="ch e">这里添加</text><text x="746" y="306.500" class="ch">这里添加</text><text x="746" y="325.500" class="ch">这里添加</text>
<path class="l" d="M670 309h33M670 312h33M685 315h18M670 328.500h33M670 331.500h33M690 334.500h13M746 309h34M746 312h34M746 315h16M746 328.500h34M746 331.500h34M746 334.500h14"/>
<!-- card 4 -->
<g clip-path="url(#dia)"><rect x="415" y="385" width="20" height="55" fill="#2db197"/><rect x="454" y="385" width="20" height="55" fill="#f2b53c"/><rect x="435" y="385" width="19" height="18" fill="#a9c66f"/><rect x="435" y="422" width="19" height="18" fill="#d2574a"/></g>
<rect x="435" y="403" width="19" height="19" fill="#fff"/><circle cx="442" cy="411" r="2.500" fill="none" stroke="#ddd"/><path d="M446 414l3-4" stroke="#ddd"/>
<rect x="428" y="409" width="4" height="6" rx="1" fill="#fff" opacity=".8"/><rect x="457" y="411" width="6" height="3" fill="#fff" opacity=".8"/><rect x="442" y="395" width="4" height="5" fill="#fff" opacity=".7"/><rect x="441" y="425" width="6" height="3" rx="1" fill="#fff" opacity=".8"/>
<text x="422" y="394" class="ch e">这里添加</text><text x="422" y="427" class="ch e">这里添加</text><text x="468" y="394" class="ch">这里添加</text><text x="468" y="427" class="ch">这里添加</text>
<path class="l" d="M388 396.500h34M388 399.500h34M395 402.500h27M388 430h34M388 433h34M396 436h26M468 396.500h34M468 399.500h34M468 402.500h24M468 430h34M468 433h34M468 436h26"/>
<!-- card 5 gears -->
<g fill="#fff">
<circle cx="558" cy="415" r="8" stroke="#2db197" stroke-width="2"/><circle cx="558" cy="415" r="10" fill="none" stroke="#2db197" stroke-width="2" stroke-dasharray="2 2.100"/>
<circle cx="575" cy="402" r="10" stroke="#a9c66f" stroke-width="2.200"/><circle cx="575" cy="402" r="12" fill="none" stroke="#a9c66f" stroke-width="2.300" stroke-dasharray="2.300 2.400"/>
<circle cx="593" cy="412" r="7" stroke="#f2b53c" stroke-width="2"/><circle cx="593" cy="412" r="9" fill="none" stroke="#f2b53c" stroke-width="2" stroke-dasharray="2 2.200"/>
<circle cx="609" cy="402" r="9" stroke="#d2574a" stroke-width="2.200"/><circle cx="609" cy="402" r="11" fill="none" stroke="#d2574a" stroke-width="2.300" stroke-dasharray="2.300 2.300"/></g>
<g class="ct" style="font-size:3.300px;fill:#666"><text x="558" y="416">这里添加</text><text x="575" y="403">这里添加</text><text x="593" y="413">这里添加</text><text x="609" y="403">这里添加</text></g>
<text x="585" y="432" class="ch" style="text-anchor:middle">这里添加</text>
<path class="l" d="M548 435h76M552 438h68M535 395h25M535 398h25M544 401h16M524 409h20M524 412h20M530 415h14M624 405h22M624 408h22M630 411h14M606 418h16M606 421h16M606 424h14"/>
<!-- card 6 X -->
<g fill="none" stroke-linecap="round"><path d="M711 399L739 427M739 399L711 427" stroke="#dedede" stroke-width="7"/><path d="M711 399L715 403" stroke="#2db197" stroke-width="8"/><path d="M739 399L735 403" stroke="#a9c66f" stroke-width="8"/><path d="M739 427L735 423" stroke="#f2b53c" stroke-width="8"/><path d="M711 427L715 423" stroke="#d2574a" stroke-width="8"/><path d="M719 405L725 411L731 405M719 421L725 415L731 421" stroke="#fff" stroke-width="1.500"/></g>
<path d="M720 396c2 2 4 2 5 1 1-2 2-2 4-2-1 3-2 6-5 6-2 0-3-1-4-2 1 0 2 0 2-1-1 0-2-1-2-2z" fill="#2db197"/>
<circle cx="742" cy="413" r="2.800" fill="#a9c66f"/><rect x="704" y="410" width="6" height="6" rx="1.500" fill="#d2574a"/><rect x="722" y="427" width="7" height="6" fill="#f2b53c"/>
<text x="702" y="397.500" class="ch e">这里添加</text><text x="702" y="420.500" class="ch e">这里添加</text><text x="748" y="397.500" class="ch">这里添加</text><text x="748" y="420.500" class="ch">这里添加</text>
<path class="l" d="M667 400h36M667 403h36M682 406h21M667 423h36M667 426h36M685 429h18M748 400h34M748 403h34M748 406h16M748 423h34M748 426h34M748 429h16"/>
<!-- card 7 X -->
<g id="a7"><path d="M424 490C422 486 425 482 429 481C433 481 436 484 437 487C438 492 441 497 444 501C439 499 430 496 424 490Z" fill="#2db197"/></g>
<path d="M466 490C468 486 465 482 461 481C457 481 454 484 453 487C452 492 449 497 446 501C451 499 460 496 466 490Z" fill="#a9c66f"/>
<path d="M424 516C422 520 425 524 429 525C433 525 436 522 437 519C438 514 441 509 444 505C439 507 430 510 424 516Z" fill="#d2574a"/>
<path d="M466 516C468 520 465 524 461 525C457 525 454 522 453 519C452 514 449 509 446 505C451 507 460 510 466 516Z" fill="#f2b53c"/>
<path d="M440 486c2 2 4 2 5 1 1-2 2-3 5-3-1 3-2 7-5 7-2.500 0-4-1-5-2.500 1.500 0 2-1 2-1-1 0-2-1-2-1.500z" fill="#2db197"/>
<circle cx="458" cy="504" r="3" fill="#a9c66f"/><rect x="429" y="500" width="7" height="7" rx="2" fill="#d2574a"/><rect x="442" y="512" width="7" height="6" fill="#f2b53c"/><rect x="449" y="514" width="4" height="4" fill="#f2b53c"/>
<text x="419" y="488.500" class="ch e">这里添加</text><text x="419" y="512" class="ch e">这里添加</text><text x="471" y="488.500" class="ch">这里添加</text><text x="471" y="512" class="ch">这里添加</text>
<path class="l" d="M387 491h33M387 494h33M400 497h20M387 514.500h33M387 517.500h33M400 520.500h20M471 491h32M471 494h32M471 497h14M471 514.500h32M471 517.500h32M471 520.500h16"/>
<!-- card 8 -->
<g fill="none" stroke-width="1"><path d="M576 481h20v11l-10 4-10-4z" stroke="#8ed5c5"/><path d="M576 492v11l10 4 10-4v-11" stroke="#d0dfa8"/><path d="M576 503v11l10 4 10-4v-11" stroke="#f8dc9c"/><path d="M576 514v16l10 5 10-5v-16" stroke="#ecaea6"/></g>
<text x="585" y="486" class="ch" style="text-anchor:middle">这里添加</text><text x="585" y="500" class="ch" style="text-anchor:middle">这里添加</text><text x="585" y="514" class="ch" style="text-anchor:middle">这里添加</text><text x="585" y="527" class="ch" style="text-anchor:middle">这里添加</text>
<path d="M584 490.500h3" stroke="#2db197"/><path d="M584 504.500h3" stroke="#a9c66f"/><path d="M584 518h3" stroke="#f2b53c"/><path d="M584 531h3" stroke="#d2574a"/>
<rect x="560.500" y="492" width="9" height="9" rx="1" fill="#2db197"/><rect x="600.500" y="492" width="9" height="9" rx="1" fill="#a9c66f"/><rect x="560.500" y="515.500" width="9" height="9" rx="1" fill="#f2b53c"/><rect x="600.500" y="515.500" width="9" height="9" rx="1" fill="#d2574a"/><g fill="#fff"><circle cx="565" cy="496.500" r="2"/><rect x="603" y="494.500" width="4" height="4"/><circle cx="565" cy="520" r="2"/><rect x="603" y="518" width="4" height="4"/></g>
<text x="558" y="494" class="ch e">这里添加</text><text x="558" y="519" class="ch e">这里添加</text><text x="612" y="494" class="ch">这里添加</text><text x="612" y="519" class="ch">这里添加</text>
<path class="l" d="M524 497h34M537 500h21M524 522h34M537 525h21M612 497h34M612 500h21M612 522h34M612 525h21"/>
<!-- card 9 -->
<path d="M676 496h17v24h-14z" fill="#a378b3"/><rect x="693" y="496" width="26" height="6" fill="#2db197"/><path d="M693 502h25l-1 6h-24z" fill="#a9c66f"/><path d="M693 508h24l-1 6h-23z" fill="#f2b53c"/><path d="M693 514h23l-1 6h-22z" fill="#d2574a"/>
<path d="M677 497l-3-7c-2-2-4 0-2 2" fill="none" stroke="#aaa"/><path d="M679 520h36" stroke="#ccc"/>
<circle cx="687.500" cy="524" r="3.200" fill="#fff" stroke="#bbb"/><circle cx="706.500" cy="524" r="3.200" fill="#fff" stroke="#bbb"/>
<text x="684.500" y="505" class="m" style="font-size:4.500px;fill:#fff;font-weight:bold">68%</text><text x="684.500" y="512" class="m" style="font-size:4.500px;fill:#fff;font-weight:bold">58%</text>
<text x="680" y="493" class="ch">这里添加</text><text x="700" y="493" class="ch">这里添加</text>
<g fill="#fff" stroke="#dcdcdc" stroke-width=".7"><path d="M725 488h54v7h-54v-2l-3-3 3 0z"/><path d="M724 499h55v7h-55l-2-6z"/><path d="M725 510h54v8h-54l-2-7z"/><path d="M725 522h54v7h-54l-5-8z"/></g>
<path class="l" d="M727 490.500h48M727 493h30M727 501h48M727 503.500h30M727 512.500h48M727 515h30M727 524h48M727 526.500h30"/>
<!-- pagination -->
<g fill="#d9d9d9"><rect x="450" y="568" width="32" height="17" rx="1"/><rect x="490" y="568" width="15.500" height="17" rx="1"/><rect x="513" y="568" width="15.500" height="17" rx="1"/><rect x="536" y="568" width="16" height="17" rx="1"/><rect x="582" y="568" width="16" height="17" rx="1"/><rect x="605" y="568" width="16" height="17" rx="1"/><rect x="628" y="568" width="16" height="17" rx="1"/><rect x="651" y="568" width="16" height="17" rx="1"/><rect x="675" y="568" width="16" height="17" rx="1"/><rect x="698" y="568" width="32" height="17" rx="1"/></g>
<rect x="559" y="568" width="16" height="17" rx="1" fill="#2db197"/>
<text x="466" y="580" class="pg">上一页</text><text x="498" y="580" class="pg">1</text><text x="521" y="580" class="pg">2</text><text x="544" y="580" class="pg">3</text><text x="567" y="580" class="pg" style="fill:#fff;font-weight:bold">4</text><text x="590" y="580" class="pg">5</text><text x="613" y="580" class="pg">6</text><text x="636" y="580" class="pg">7</text><text x="659" y="580" class="pg">8</text><text x="683" y="580" class="pg">9</text><text x="714" y="580" class="pg">下一页</text>
</svg>
</body></html>
